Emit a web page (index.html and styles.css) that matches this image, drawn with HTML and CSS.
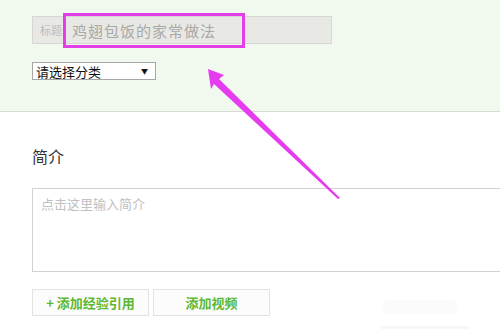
FILE: index.html
```html
<!DOCTYPE html>
<html lang="zh">
<head>
<meta charset="utf-8">
<link rel="stylesheet" href="styles.css">
</head>
<body>
<div class="page">
  <section class="top">
    <div class="title-input">
      <span class="label">标题:</span>
      <span class="value">鸡翅包饭的家常做法</span>
    </div>
    <div class="select">
      <span>请选择分类</span>
      <span class="caret">▼</span>
    </div>
  </section>
  <section class="main">
    <h2 class="heading">简介</h2>
    <div class="textarea">点击这里输入简介</div>
    <div class="buttons">
      <div class="btn">+ 添加经验引用</div>
      <div class="btn">添加视频</div>
    </div>
  </section>
  <div class="highlight"></div>
  <svg class="arrow" width="500" height="330" viewBox="0 0 500 330">
    <polygon points="208,69 224,75 219,79 340,198 338,199 214,84 211,89" fill="#e63cf0"/>
  </svg>
  <div class="ghost ghost1"></div>
  <div class="ghost ghost2"></div>
</div>
</body>
</html>
```
FILE: styles.css
```css
html, body {
  margin: 0;
  padding: 0;
  background: #fff;
  overflow: hidden;
}
.page {
  position: relative;
  width: 500px;
  height: 330px;
  overflow: hidden;
  font-family: "Noto Sans CJK SC", "Liberation Sans", sans-serif;
}
.top {
  background: #f1f9ef;
  border-bottom: 1px solid #d6d9d4;
  padding: 16px 0 0 32px;
  box-sizing: border-box;
  height: 112px;
}
.title-input {
  width: 300px;
  height: 28px;
  box-sizing: border-box;
  background: #e8e8e5;
  border: 1px solid #d6d6d2;
  display: flex;
  align-items: center;
  padding-left: 7px;
  gap: 7px;
}
.label {
  font-size: 11px;
  color: #bcbcbc;
}
.value {
  font-size: 15px;
  color: #a8a8a8;
  letter-spacing: 1px;
}
.select {
  margin-top: 18px;
  width: 124px;
  height: 18px;
  box-sizing: border-box;
  background: #fff;
  border: 1px solid #a6a6a6;
  display: flex;
  align-items: center;
  justify-content: space-between;
  padding: 0 7px 0 3px;
  font-size: 13px;
  color: #111;
  line-height: 1;
}
.caret {
  font-size: 7px;
}
.main {
  padding: 0 0 0 32px;
}
.heading {
  margin: 32px 0 0;
  font-size: 16px;
  font-weight: normal;
  color: #333;
  line-height: 24px;
  height: 24px;
}
.textarea {
  margin-top: 20px;
  width: 520px;
  height: 84px;
  box-sizing: border-box;
  border: 1px solid #d2d2d2;
  padding: 6px 8px;
  font-size: 13px;
  color: #c0c0c0;
  line-height: 18px;
}
.buttons {
  margin-top: 17px;
  display: flex;
  gap: 4px;
}
.btn {
  width: 117px;
  height: 27px;
  box-sizing: border-box;
  border: 1px solid #e2e2e2;
  background: #fcfcfc;
  display: flex;
  align-items: center;
  justify-content: center;
  font-size: 13px;
  color: #5cb833;
  font-weight: bold;
}
.highlight {
  position: absolute;
  left: 63px;
  top: 13px;
  width: 182px;
  height: 35px;
  box-sizing: border-box;
  border: 3px solid #e43ee8;
}
.arrow {
  position: absolute;
  left: 0;
  top: 0;
}
.ghost {
  position: absolute;
  background: #fbfbfb;
}
.ghost1 {
  left: 382px;
  top: 300px;
  width: 76px;
  height: 14px;
  border-radius: 7px;
}
.ghost2 {
  left: 381px;
  top: 326px;
  width: 88px;
  height: 3px;
  background: #f7f7f7;
}
```
